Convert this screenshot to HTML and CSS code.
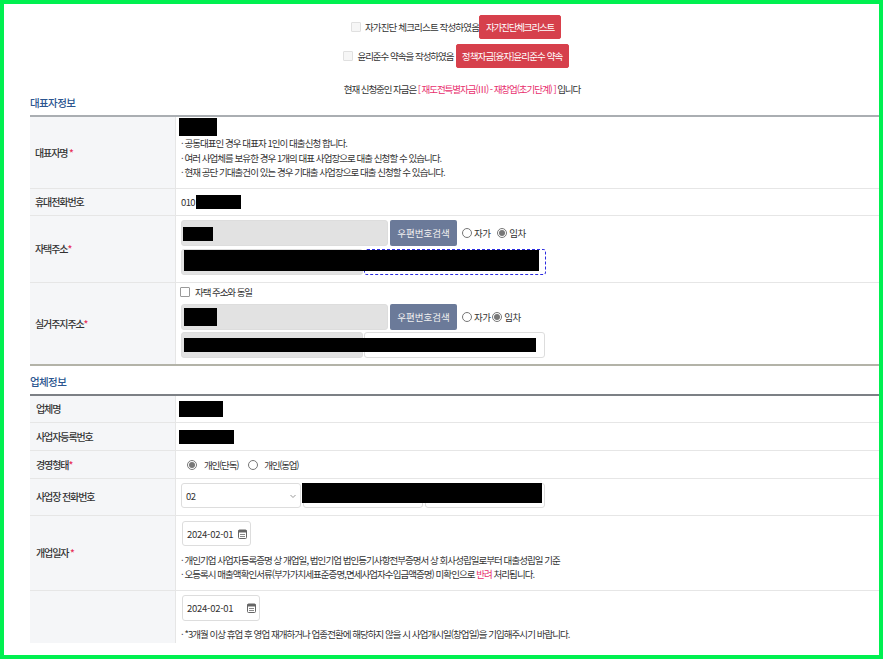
FILE: index.html
```html
<!DOCTYPE html>
<html lang="ko">
<head>
<meta charset="utf-8">
<title>신청서</title>
<link rel="stylesheet" href="styles.css">
</head>
<body>
<div class="frame">
  <main class="main">
    <section class="agree">
      <div class="agree-line">
        <input type="checkbox" class="check" disabled>
        <span class="agree-text">자가진단 체크리스트 작성하였음</span>
        <button class="btn-red btn-a">자가진단체크리스트</button>
      </div>
      <div class="agree-line agree-second">
        <input type="checkbox" class="check" disabled>
        <span class="agree-text">윤리준수 약속을 작성하였음</span>
        <button class="btn-red btn-b">정책자금[융자]윤리준수 약속</button>
      </div>
      <p class="notice">현재 신청중인 자금은 <em>[ 재도전특별자금(Ⅲ) - 재창업(초기단계) ]</em> 입니다</p>
    </section>

    <h2 class="title title-first">대표자정보</h2>
    <div class="table table-a">
      <div class="row h-name">
        <div class="label">대표자명 <i>*</i></div>
        <div class="value">
          <span class="black b-name"></span>
          <ul class="notes">
            <li>공동대표인 경우 대표자 1인이 대출신청 합니다.</li>
            <li>여러 사업체를 보유한 경우 1개의 대표 사업장으로 대출 신청할 수 있습니다.</li>
            <li>현재 공단 기대출건이 있는 경우 기대출 사업장으로 대출 신청할 수 있습니다.</li>
          </ul>
        </div>
      </div>
      <div class="row h-phone">
        <div class="label">휴대전화번호</div>
        <div class="value inline">010<span class="black b-phone"></span></div>
      </div>
      <div class="row h-home">
        <div class="label">자택주소<i>*</i></div>
        <div class="value stack pad-home">
          <div class="line">
            <input class="field zip" disabled>
            <button class="btn-zip">우편번호검색</button>
            <label class="opt opt-first"><input type="radio" name="home" class="radio">자가</label>
            <label class="opt opt-gap"><input type="radio" name="home" class="radio" checked>임차</label>
          </div>
          <div class="line">
            <input class="field half" disabled>
            <input class="field half2 focused">
          </div>
          <span class="black over b-home-zip"></span>
          <span class="black over b-home-addr"></span>
        </div>
      </div>
      <div class="row h-real row-end">
        <div class="label">실거주지주소<i>*</i></div>
        <div class="value stack pad-real">
          <label class="same"><input type="checkbox" class="check check-on">자택 주소와 동일</label>
          <div class="line line-real">
            <input class="field zip" disabled>
            <button class="btn-zip">우편번호검색</button>
            <label class="opt opt-first"><input type="radio" name="real" class="radio">자가</label>
            <label class="opt"><input type="radio" name="real" class="radio" checked>임차</label>
          </div>
          <div class="line line-tight">
            <input class="field half" disabled>
            <input class="field half2">
          </div>
          <span class="black over b-real-zip"></span>
          <span class="black over b-real-addr"></span>
        </div>
      </div>
    </div>

    <h2 class="title title-second">업체정보</h2>
    <div class="table table-b">
      <div class="row h-company">
        <div class="label">업체명</div>
        <div class="value inline"><span class="black b-company"></span></div>
      </div>
      <div class="row h-biz">
        <div class="label">사업자등록번호</div>
        <div class="value inline"><span class="black b-biz"></span></div>
      </div>
      <div class="row h-biz">
        <div class="label">경영형태<i>*</i></div>
        <div class="value inline">
          <label class="opt opt-biz"><input type="radio" name="form" class="radio" checked>개인(단독)</label>
          <label class="opt opt-biz2"><input type="radio" name="form" class="radio">개인(동업)</label>
        </div>
      </div>
      <div class="row h-tel">
        <div class="label">사업장 전화번호</div>
        <div class="value stack pad-tel">
          <div class="line line-tel">
            <div class="select">
              02
              <svg class="chev" width="8" height="5" viewBox="0 0 8 5"><path d="M1.5 1l2.5 2.5L6.5 1" fill="none" stroke="#999" stroke-width="1"/></svg>
            </div>
            <input class="field tel">
            <input class="field tel">
          </div>
          <span class="black over b-tel"></span>
        </div>
      </div>
      <div class="row h-open">
        <div class="label">개업일자 <i>*</i></div>
        <div class="value stack pad-open">
          <div class="date date-a">2024-02-01
            <svg class="cal" width="9" height="10" viewBox="0 0 9 10"><rect x="0.5" y="1" width="8" height="8.5" rx="1" fill="none" stroke="#666"/><rect x="0.5" y="1" width="8" height="2.5" fill="#666"/><rect x="2" y="5" width="5" height="1" fill="#888"/><rect x="2" y="7" width="5" height="1" fill="#888"/></svg>
          </div>
          <ul class="notes notes-open">
            <li>개인기업 사업자등록증명 상 개업일, 법인기업 법인등기사항전부증명서 상 회사성립일로부터 대출성립일 기준</li>
            <li>오등록시 매출액확인서류(부가가치세표준증명,면세사업자수입금액증명) 미확인으로 <b>반려</b> 처리됩니다.</li>
          </ul>
        </div>
      </div>
      <div class="row h-last">
        <div class="label"></div>
        <div class="value stack pad-last">
          <div class="date date-b">2024-02-01
            <svg class="cal" width="9" height="10" viewBox="0 0 9 10"><rect x="0.5" y="1" width="8" height="8.5" rx="1" fill="none" stroke="#666"/><rect x="0.5" y="1" width="8" height="2.5" fill="#666"/><rect x="2" y="5" width="5" height="1" fill="#888"/><rect x="2" y="7" width="5" height="1" fill="#888"/></svg>
          </div>
          <ul class="notes notes-last">
            <li>*3개월 이상 휴업 후 영업 재개하거나 업종전환에 해당하지 않을 시 사업개시일(창업일)을 기입해주시기 바랍니다.</li>
          </ul>
        </div>
      </div>
    </div>
  </main>
</div>
</body>
</html>
```

FILE: styles.css
```css
* { box-sizing: border-box; }
html, body { margin: 0; padding: 0; background: #fff; }
body {
  font-family: "Noto Sans CJK KR", "Noto Sans", sans-serif;
  font-size: 9.5px;
  color: #333;
  letter-spacing: -0.6px;
}
.frame {
  width: 883px;
  height: 659px;
  border: 4px solid #00f050;
  background: #fff;
}
.main {
  height: 639px;
  overflow: hidden;
  padding-left: 26px;
}
.agree { padding: 11px 0 0 3px; }
.agree-line {
  display: flex;
  justify-content: center;
  align-items: center;
  height: 24px;
}
.agree-second { margin-top: 5px; }
.agree-text { margin-left: 4px; white-space: nowrap; letter-spacing: -0.85px; }
.agree-second .agree-text { margin-right: 2px; letter-spacing: -1px; }
.check {
  appearance: none;
  width: 10px;
  height: 10px;
  margin: 0;
  border: 1px solid #e0e0e0;
  border-radius: 1px;
  background: #f6f6f6;
}
.btn-red {
  height: 24px;
  border: 1px solid #d9404b;
  border-radius: 2px;
  background: #d6404c;
  color: #fff;
  font: inherit;
  padding: 0;
  white-space: nowrap;
}
.btn-a { width: 82px; letter-spacing: -1.15px; }
.btn-b { width: 113px; letter-spacing: -0.9px; }
.notice {
  margin: 14px 0 0 12px;
  text-align: center;
  line-height: 14px;
  letter-spacing: -1.05px;
}
.notice em { font-style: normal; color: #e8306e; }
.title {
  margin: 0;
  font-size: 10.5px;
  font-weight: 500;
  line-height: 14px;
  color: #2b5590;
}
.title-first { height: 19px; }
.title-second { height: 28px; padding: 9px 0 0; }
.table-a { border-top: 2px solid #aaaeb2; }
.table-b { border-top: 2px solid #7c8085; }
.row {
  display: grid;
  grid-template-columns: 145px 1fr;
  border-bottom: 1px solid #e6e6e6;
}
.row-end { border-bottom: 2px solid #b3b3a8; }
.label {
  display: flex;
  align-items: center;
  padding-left: 5px;
  padding-bottom: 1px;
  background: #f5f6f8;
  color: #333;
  font-size: 10px;
  font-weight: 500;
  letter-spacing: -1.1px;
  white-space: pre;
}
.table-b .label { padding-left: 6px; }
.label i { font-style: normal; color: #e8305a; }
.value {
  position: relative;
  border-left: 1px solid #e6e6e6;
  padding-left: 5px;
  min-width: 0;
}
.inline { display: flex; align-items: center; }
.stack { display: flex; flex-direction: column; align-items: flex-start; }
.h-name { height: 72px; }
.h-phone { height: 27px; }
.h-home { height: 67px; }
.h-real { height: 83px; }
.h-company { height: 27px; }
.h-biz { height: 28px; }
.h-tel { height: 37px; }
.h-open { height: 75px; }
.h-last { height: 60px; }
.pad-home { padding-top: 4px; }
.pad-real { padding-top: 1px; }
.pad-tel { padding-top: 4px; }
.pad-open { padding-top: 5px; }
.pad-last { padding-top: 4px; }

.black { display: block; background: #000; flex: none; }
.over { position: absolute; }
.b-name { width: 38px; height: 18px; margin: 1px 0 0 -2px; }
.b-phone { width: 45px; height: 14px; margin-left: 1px; }
.b-company { width: 44px; height: 16px; margin-left: -2px; }
.b-biz { width: 55px; height: 14px; margin-left: -2px; }
.b-home-zip { left: 7px; top: 11px; width: 30px; height: 14px; }
.b-home-addr { left: 8px; top: 34px; width: 355px; height: 21px; }
.b-real-zip { left: 8px; top: 25px; width: 33px; height: 18px; }
.b-real-addr { left: 8px; top: 55px; width: 352px; height: 14px; }
.b-tel { left: 126px; top: 4px; width: 240px; height: 20px; }

.notes {
  list-style: none;
  margin: 0;
  padding: 0;
  line-height: 14.5px;
  letter-spacing: -0.95px;
  white-space: nowrap;
}
.notes li::before { content: "· "; }
.notes b { font-weight: 400; color: #e8306e; }
.notes-open { margin-top: 7px; line-height: 14px; }
.notes-last { margin-top: 6px; line-height: 14px; }

.line { display: flex; align-items: center; gap: 2px; height: 26px; margin-bottom: 3px; }
.line-real { margin-bottom: 2px; }
.line-tight { margin-bottom: 0; }
.line-tel { height: 25px; margin: 0; }
.field {
  display: block;
  height: 100%;
  margin: 0;
  padding: 0 4px;
  border: 1px solid #ddd;
  border-radius: 3px;
  background: #fff;
  font: inherit;
}
.field:disabled { background: #e2e2e2; }
.zip { width: 207px; }
.half { width: 182px; }
.half2 { width: 181px; margin-left: -1px; }
.focused { width: 182px; border: 1px dashed #2b2be0; }
.tel { width: 120px; margin-left: 0; }
.btn-zip {
  width: 67px;
  height: 26px;
  padding: 0;
  border: 0;
  border-radius: 2px;
  background: #6b7a99;
  color: #f0f0f0;
  font: inherit;
}
.opt { display: inline-flex; align-items: center; gap: 2px; white-space: nowrap; }
.opt-first { margin-left: 3px; }
.opt-gap { margin-left: 5px; }
.opt-biz { margin-left: 6px; gap: 7px; letter-spacing: -1.2px; }
.opt-biz2 { margin-left: 10px; gap: 6px; letter-spacing: -1.2px; }
.radio {
  width: 10px;
  height: 10px;
  margin: 0;
  accent-color: #777;
}
.same {
  display: flex;
  align-items: center;
  gap: 5px;
  height: 15px;
  margin: 0 0 5px -1px;
  letter-spacing: -1.05px;
}
.check-on { background: #fff; border-color: #999; }
.select {
  position: relative;
  display: flex;
  align-items: center;
  width: 120px;
  height: 25px;
  padding-left: 4px;
  border: 1px solid #ddd;
  border-radius: 3px;
  background: #fff;
}
.chev { position: absolute; right: 3px; top: 10px; }
.date {
  position: relative;
  display: flex;
  align-items: center;
  flex: none;
  height: 25px;
  margin-left: 1px;
  padding-left: 4px;
  border: 1px solid #ddd;
  border-radius: 3px;
  background: #fff;
  color: #333;
  letter-spacing: -0.25px;
}
.cal { position: absolute; right: 3px; top: 7px; }
.date-a { width: 69px; }
.date-b { width: 78px; height: 26px; }
```
